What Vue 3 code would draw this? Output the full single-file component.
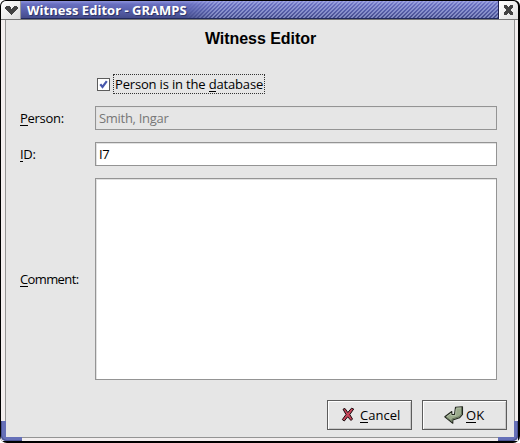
<script setup>
import { ref } from 'vue'

const inDatabase = ref(true)
const person = ref('Smith, Ingar')
const personId = ref('I7')
const comment = ref('')
</script>

<template>
  <div class="window">
    <header class="titlebar">
      <button class="menu" aria-label="Window menu">
        <svg width="20" height="18" viewBox="0 0 20 18" shape-rendering="crispEdges">
          <path fill="#424242" d="M6 5h3v1h1v1h1v1h1v-1h1v-1h1v-1h3v1h1v2h-1v1h-1v1h-1v1h-1v1h-1v1h-1v1h-2v-1h-1v-1h-1v-1h-1v-1h-1v-1h-1v-1h-1v-2h1z" />
        </svg>
      </button>
      <div class="caption"><span class="caption-text">Witness Editor - GRAMPS</span><span class="stripes"></span></div>
      <button class="close" aria-label="Close">
        <svg width="19" height="18" viewBox="0 0 19 18" shape-rendering="crispEdges">
          <path fill="#424242" d="M4 4h3v1h1v1h2v-1h1v-1h3v3h-1v1h-1v2h1v1h1v3h-3v-1h-1v-1h-2v1h-1v1h-3v-3h1v-1h1v-2h-1v-1h-1z" />
        </svg>
      </button>
    </header>
    <div class="frame">
      <main class="body">
        <h1>Witness Editor</h1>
        <div class="form">
          <div class="check" role="checkbox" :aria-checked="inDatabase" @click="inDatabase = !inDatabase">
            <span class="box">
              <svg v-if="inDatabase" width="11" height="11" viewBox="0 0 11 11">
                <path d="M2.3 5.3L4.5 8L8.8 2.2" fill="none" stroke="#4858ac" stroke-width="2.2" />
              </svg>
            </span>
            <span class="focus"><span class="check-text">Person is in the <u>d</u>atabase</span></span>
          </div>
          <label class="label person" for="person"><span><u>P</u>erson:</span></label>
          <input id="person" v-model="person" class="field" disabled />
          <label class="label id" for="pid"><span><u>I</u>D:</span></label>
          <input id="pid" v-model="personId" class="field" />
          <label class="label comment" for="comment"><span><u>C</u>omment:</span></label>
          <textarea id="comment" v-model="comment" class="field area"></textarea>
        </div>
        <div class="actions">
          <button class="action">
            <svg class="cross" width="14" height="16" viewBox="0 0 14 16">
              <path d="M2 2.2L4 1.5L6.8 5.5L10.5 1.2L12.7 2L8.8 7.6L11.5 12L10 13.5L6.7 9.8L3.3 14L1.3 12.6L5 7.5Z" fill="#c8455a" stroke="#190b0d" stroke-width="1" />
            </svg>
            <span class="cancel-text"><u>C</u>ancel</span>
          </button>
          <button class="action ok">
            <svg class="enter" width="20" height="18" viewBox="0 0 20 18">
              <path d="M11.5 1.2L18.5 .8V8.5L15.5 11.8L8.8 14V17.2L.8 10.8L7.8 5.5V8.5H10.5Z" fill="#9aaa8b" stroke="#20251d" stroke-width="1.1" stroke-linejoin="round" />
              <path d="M12.3 2.2L17 1.9M3 10.6L7 7.4V9.6H11.5L12.2 3" fill="none" stroke="#b9c5ae" stroke-width=".8" />
              <path d="M17.5 2V8L15 10.8L8 13V15.5L2.5 11.5" fill="none" stroke="#65735c" />
            </svg>
            <span class="ok-text"><u>O</u>K</span>
          </button>
        </div>
      </main>
    </div>
    <i class="corner left"></i>
    <i class="corner right"></i>
  </div>
</template>

<style>
body { margin: 0; background: #fff; }
</style>

<style scoped>
* { box-sizing: border-box; }
.window {
  position: relative;
  width: 520px;
  height: 443px;
  padding: 1px 2px 2px 1px;
  background: #000;
  border-radius: 6px 6px 7px 7px;
  overflow: hidden;
  display: flex;
  flex-direction: column;
  font: 13px/16px "Open Sans", "Noto Sans", sans-serif;
  color: #000;
}
button { font: inherit; padding: 0; margin: 0; color: inherit; }
u { text-decoration: none; border-bottom: 1px solid #000; display: inline-block; line-height: 13px; }
.titlebar { display: flex; height: 19px; flex: none; border-bottom: 1px solid #777; border-radius: 5px 5px 0 0; overflow: hidden; }
.menu, .close { width: 20px; flex: none; border: 0; background: linear-gradient(135deg, #fff, #dedede); display: flex; }
.menu { border-right: 1px solid #999; }
.close { width: 19px; border-left: 1px solid #fff; }
.caption {
  flex: 1;
  display: flex;
  align-items: center;
  border-right: 1px solid #20204c;
  border-bottom: 1px solid #20285c;
  background: linear-gradient(#8d92dd 0, #6970c0 3px, #5961ad 9px, #444c8b 100%);
}
.caption-text { margin-left: 6px; width: 158px; flex: none; font-weight: 700; font-size: 13px; color: #fff; white-space: nowrap; text-shadow: 1px 1px #303568; letter-spacing: .02px; }
.stripes { flex: 1; height: 100%; background: repeating-linear-gradient(135deg, transparent 0 1.6px, rgba(180, 188, 235, .55) 2px 2.83px); mask-image: linear-gradient(90deg, transparent, #000 30px); }
.frame { flex: 1; padding: 0 3px 3px 4px; background: #f3efef; display: flex; }
.body { flex: 1; background: #e6e6e6; border: 1px solid #949494; border-top: 0; padding: 10px 7px 7px 14px; display: flex; flex-direction: column; }
h1 { margin: 0; font: 700 16px/18px "Liberation Sans", sans-serif; text-align: center; padding-right: 6px; letter-spacing: -.05px; }
.form { display: grid; grid-template-columns: 75px 402px; grid-template-rows: 20px 24px 24px 202px; row-gap: 12px; margin-top: 26px; align-items: center; }
.label { letter-spacing: -.3px; }
.comment { letter-spacing: -.62px; }
.check { grid-column: 2; display: flex; align-items: center; padding-left: 2px; gap: 3px; }
.box { width: 13px; height: 13px; border: 1px solid #5c5c5c; background: #fff; display: flex; }
.focus { width: 152px; height: 20px; border: 1px dotted #333; padding: 1px 0 0 1px; white-space: nowrap; }
.check-text { letter-spacing: -.17px; }
.field {
  width: 402px;
  height: 24px;
  margin: 0;
  border: 1px solid #949494;
  border-radius: 0;
  box-shadow: inset 1px 1px #e1e1e1;
  background: #fff;
  color: #000;
  font: inherit;
  letter-spacing: -.3px;
  padding: 0 3px;
  outline: 0;
}
.field:disabled { background: #e6e6e6; color: #777; }
.area { height: 202px; resize: none; display: block; }
.actions { display: flex; justify-content: flex-end; gap: 10px; margin-top: 20px; }
.action { width: 85px; height: 30px; border: 1px solid #5c5c5c; background: #e6e6e6; box-shadow: inset 1px 1px #fff, inset -1px -1px #c8c8c8; display: flex; align-items: center; padding-left: 13px; }
.cross { margin-right: 5px; }
.ok { padding-left: 21px; }
.enter { margin-right: 2px; }
.corner { position: absolute; background: #6670b8; }
.left { left: 1px; bottom: 2px; width: 21px; height: 20px; border-radius: 0 0 0 5px; clip-path: polygon(0 0, 5px 0, 5px 16px, 21px 16px, 21px 20px, 0 20px); box-shadow: inset 1px -1px #4b5493; }
.right { right: 2px; bottom: 2px; width: 20px; height: 20px; border-radius: 0 0 5px; clip-path: polygon(16px 0, 20px 0, 20px 20px, 0 20px, 0 16px, 16px 16px); box-shadow: inset -1px -1px #4b5493; }
</style>
